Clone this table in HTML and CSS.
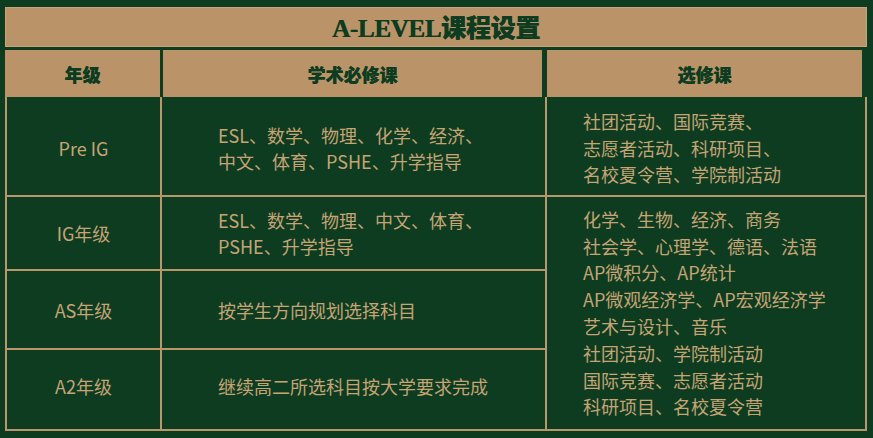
FILE: index.html
```html
<!DOCTYPE html>
<html lang="zh-CN">
<head>
<meta charset="utf-8">
<title>A-LEVEL课程设置</title>
<link rel="stylesheet" href="styles.css">
</head>
<body>
<div class="board">
  <div class="title">A-LEVEL课程设置</div>
  <div class="head">
    <div class="hcell">年级</div>
    <div class="hcell">学术必修课</div>
    <div class="hcell">选修课</div>
  </div>
  <div class="grid">
    <div class="cell grade r1">Pre IG</div>
    <div class="cell req r1">ESL、数学、物理、化学、经济、<br>中文、体育、PSHE、升学指导</div>
    <div class="cell opt r1 c3a">社团活动、国际竞赛、<br>志愿者活动、科研项目、<br>名校夏令营、学院制活动</div>

    <div class="cell grade r2">IG年级</div>
    <div class="cell req r2">ESL、数学、物理、中文、体育、<br>PSHE、升学指导</div>
    <div class="cell opt c3b">化学、生物、经济、商务<br>社会学、心理学、德语、法语<br>AP微积分、AP统计<br>AP微观经济学、AP宏观经济学<br>艺术与设计、音乐<br>社团活动、学院制活动<br>国际竞赛、志愿者活动<br>科研项目、名校夏令营</div>

    <div class="cell grade r3">AS年级</div>
    <div class="cell req r3">按学生方向规划选择科目</div>

    <div class="cell grade r4">A2年级</div>
    <div class="cell req r4">继续高二所选科目按大学要求完成</div>
  </div>
</div>
</body>
</html>
```

FILE: styles.css
```css
html, body {
  margin: 0;
  padding: 0;
  background: #0d3c21;
}

body {
  font-family: "Noto Sans CJK SC", "Noto Sans", sans-serif;
  color: #c6a474;
}

.board {
  width: 862px;
  margin: 7px 0 0 5px;
}

.title {
  height: 40px;
  box-sizing: border-box;
  background: #ba9468;
  border: 1px solid #c6a477;
  color: #0d3c21;
  font-family: "Liberation Serif", "Noto Sans CJK SC", serif;
  font-weight: 900;
  font-size: 25px;
  line-height: 42px;
  text-align: center;
  letter-spacing: -0.3px;
  text-shadow: 0.5px 0 0 #0d3c21;
}

.head {
  margin-top: 3px;
  display: grid;
  grid-template-columns: 155px 382px 320px;
  height: 47px;
}

.hcell {
  background: #ba9468;
  color: #0d3c21;
  font-weight: 900;
  font-size: 18px;
  display: flex;
  align-items: center;
  justify-content: center;
  text-shadow: 0.3px 0 0 #0d3c21;
}

.hcell:nth-child(2) {
  margin-left: 3px;
}

.hcell:nth-child(3) {
  margin-left: 5px;
}

.grid {
  display: grid;
  grid-template-columns: 153px 383px 318px;
  grid-template-rows: 98px 72px 77px 79px;
  gap: 2px;
  padding: 0 2px 2px 2px;
  background: #b8986a;
}

.cell {
  background: #0d3c21;
  font-size: 18px;
  display: flex;
  align-items: center;
}

.grade {
  justify-content: center;
}

.req {
  padding-left: 56px;
  line-height: 26px;
}

.opt {
  padding-left: 36px;
  line-height: 26.8px;
}

.r1 {
  padding-top: 4px;
}

.r4 {
  padding-bottom: 8px;
}

.c3b {
  grid-column: 3;
  grid-row: 2 / span 3;
}
```
